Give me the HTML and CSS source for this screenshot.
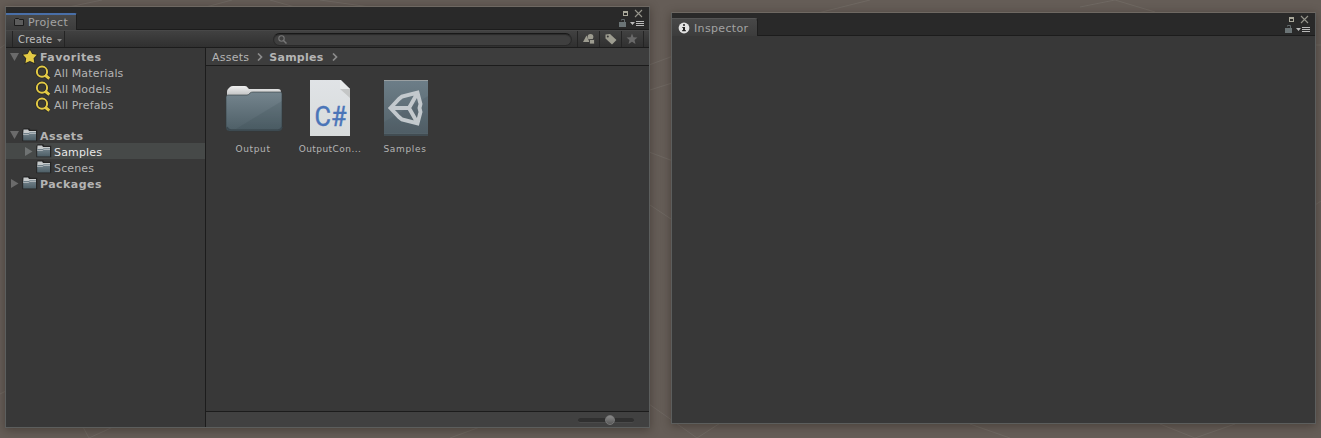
FILE: index.html
```
<!DOCTYPE html>
<html lang="en">
<head>
<meta charset="utf-8">
<title>Project</title>
<link rel="stylesheet" href="styles.css">
</head>
<body>
<svg width="0" height="0" class="defs">
  <defs>
    <linearGradient id="fold" x1="0" y1="0" x2="0" y2="1"><stop offset="0" stop-color="#75858e"/><stop offset="1" stop-color="#4d5e66"/></linearGradient>
    <linearGradient id="card" x1="0" y1="0" x2="0" y2="1"><stop offset="0" stop-color="#6d7e88"/><stop offset="1" stop-color="#526067"/></linearGradient>
    <linearGradient id="tabg" x1="0" y1="0" x2="0" y2="1"><stop offset="0" stop-color="#f0f0f0"/><stop offset="1" stop-color="#a9abac"/></linearGradient>
    <linearGradient id="paper" x1="0" y1="0" x2="0" y2="1"><stop offset="0" stop-color="#e0e3e6"/><stop offset="1" stop-color="#d7dbdb"/></linearGradient>
    <symbol id="folder" viewBox="0 0 16 14">
      <path d="M1 2.500L2 1h5l1 1.500h6.500v10H1z" fill="#252a2d" stroke="#252525" stroke-width="1.500"/>
      <path d="M1.500 1.500h4.500l1 1.500h7v3H1.200z" fill="#c6cacb"/>
      <path d="M1.200 5h5.500l1-.7H14V12.500H1.200z" fill="url(#fold)"/>
      <path d="M1.200 6.500h5.500l1-1H14" fill="none" stroke="#b2b9bc" stroke-width=".9"/>
    </symbol>
    <symbol id="search" viewBox="0 0 16 16">
      <path d="M10 10l4 3.500" stroke="#242424" stroke-width="4.600"/>
      <circle cx="7" cy="6.700" r="5.100" fill="#3b3a34" stroke="#292826" stroke-width="3.400"/>
      <path d="M10 10l4.300 3.600" stroke="#e3ca45" stroke-width="3"/>
      <circle cx="7" cy="6.700" r="5.100" fill="none" stroke="#e3ca45" stroke-width="2"/>
    </symbol>
    <symbol id="controls" viewBox="0 0 28 20">
      <path d="M6 3h5v5H6zM7 5v2h3V5z" fill="#aaa99b" fill-rule="evenodd"/>
      <path d="M18 2l7 7M25 2l-7 7" stroke="#96958c" stroke-width="1.100"/>
      <path d="M2 14h7v5H2z" fill="#6b7476"/><path d="M4.500 12.500v-1h3V14" fill="none" stroke="#626a6c" stroke-width="1"/>
      <path d="M13 14h5l-2.500 3zM19 13h8v1h-8zM19 15h8v1h-8zM19 17h8v1h-8z" fill="#b9b9b9"/>
    </symbol>
  </defs>
</svg>
<svg class="scene" width="1321" height="438">
  <path d="M64 8L102 0M232 0l-26 7M270 0l25 7M320 0l50 7M650 205l30 20M649 404l48 34 28-18M83 427l6 11 24-11M0 48l6-4M0 394l6-3M649 65l24-9M649 152l24 9M1080 7l35-7 40 12M870 0l-56 14M1315 45h6M1315 205l6-4M650 90l22-7M1160 424l35 14 40-14M450 438l30-11M1010 438l-40-14" fill="none" stroke="#6f6862"/>
</svg>
<main class="desktop">
  <section class="window project">
    <header class="tabs">
      <div class="tab active"><svg class="tabicon" width="12" height="10"><path d="M1.500 8.500v-6l1-1h3l1 1h4v6z" fill="#5c5c5c" stroke="#1c1c1c"/></svg><span>Project</span></div>
      <svg class="controls" width="28" height="20"><use href="#controls"/></svg>
    </header>
    <div class="toolbar">
      <div class="create"><span>Create</span><svg width="5" height="3"><path d="M0 0h5L2.500 3z" fill="#8a8a8a"/></svg></div>
      <div class="field"><svg width="9" height="9"><circle cx="3.500" cy="3.500" r="2.700" fill="none" stroke="#777" stroke-width="1.100"/><path d="M5.500 5.500l3 3" stroke="#777" stroke-width="1.500"/></svg></div>
      <div class="tool"><svg width="12" height="12"><path d="M0 9L3.500 2.500 6.500 9z" fill="#9d9c90"/><circle cx="7.500" cy="3.800" r="2.900" fill="#9d9c90"/><path d="M6.500 6.500h5v4.500h-5z" fill="#9d9c90" stroke="#363636" stroke-width=".8"/></svg></div>
      <div class="tool"><svg width="12" height="12"><path d="M.5 1.500v4l6.500 6L11.500 7 5 1z" fill="#9d9c90"/><circle cx="2.800" cy="3.500" r="1" fill="#363636"/></svg></div>
      <div class="tool"><svg width="12" height="12"><path d="M6 .5l1.500 3.700 4 .2-3 2.600 1 4L6 8.800 2.500 11l1-4-3-2.600 4-.2z" fill="#696969"/></svg></div>
    </div>
    <div class="body">
      <nav class="tree">
        <div class="row head"><svg class="arrow" width="9" height="8"><path d="M0 0h9L4.500 8z" fill="#6b6b6b"/></svg><svg class="star" width="16" height="16"><path d="M7.900 1l2.300 4.100 4.600.7-3.200 3.400.7 4.900-4.400-2.100-4.400 2.100.7-4.900L1 5.800l4.600-.7z" fill="#e3ca45" stroke="#2c2a20" stroke-width="1.600" paint-order="stroke"/></svg><span>Favorites</span></div>
        <div class="row child"><svg class="mag" width="16" height="16"><use href="#search"/></svg><span>All Materials</span></div>
        <div class="row child"><svg class="mag" width="16" height="16"><use href="#search"/></svg><span>All Models</span></div>
        <div class="row child"><svg class="mag" width="16" height="16"><use href="#search"/></svg><span>All Prefabs</span></div>
        <div class="group">
          <div class="row head"><svg class="arrow" width="9" height="8"><path d="M0 0h9L4.500 8z" fill="#6b6b6b"/></svg><svg class="fold" width="16" height="14"><use href="#folder"/></svg><span>Assets</span></div>
          <div class="row child selected"><svg class="arrow" width="9" height="9"><path d="M1 0v9l7.500-4.500z" fill="#6f7373"/></svg><svg class="fold" width="16" height="14"><use href="#folder"/></svg><span>Samples</span></div>
          <div class="row child"><svg class="fold" width="16" height="14"><use href="#folder"/></svg><span>Scenes</span></div>
          <div class="row head"><svg class="arrow" width="9" height="9"><path d="M1 0v9l7.500-4.500z" fill="#6b6b6b"/></svg><svg class="fold" width="16" height="14"><use href="#folder"/></svg><span>Packages</span></div>
        </div>
      </nav>
      <div class="content">
        <div class="crumbs"><span class="c1">Assets</span><svg class="chev" width="6" height="8"><path d="M1 .5L4.500 4 1 7.500" fill="none" stroke="#8b8b8b" stroke-width="1.700"/></svg><b>Samples</b><svg class="chev" width="6" height="8"><path d="M1 .5L4.500 4 1 7.500" fill="none" stroke="#8b8b8b" stroke-width="1.700"/></svg></div>
        <div class="grid">
          <figure class="item"><svg width="64" height="64" viewBox="0 0 64 64">
            <path d="M5 16q0-2 1-3l2-2q1-1 3-1h12q2 0 3 2l1 1h29q3 0 3 3v8H5z" fill="url(#tabg)"/>
            <path d="M4 21q0-2 2-2h19q2 0 3-2 1-1 3-1h28q1 0 1 2v33q0 4-4 4H8q-4 0-4-4z" fill="url(#fold)" stroke="#313a3e" stroke-width=".6"/>
            <path d="M60 25L14 53H56q4 0 4-4z" fill="#33444c" opacity=".16"/>
            <path d="M5 51q1 3 4 3h47q3 0 4-3" fill="none" stroke="#3b484f" stroke-width="1.500"/></svg><figcaption>Output</figcaption></figure>
          <figure class="item"><svg width="64" height="64" viewBox="0 0 64 64">
            <path d="M12 4h31l9 9v47H12z" fill="url(#paper)"/><path d="M42 4v8q0 1 1 1h9v9L42 13z" fill="#c4c6c6"/><path d="M42 4l10 9h-9q-1 0-1-1z" fill="#e7eaea"/>
            <text class="cs" x="16.500" y="50" textLength="32" lengthAdjust="spacingAndGlyphs">C#</text></svg><figcaption>OutputCon...</figcaption></figure>
          <figure class="item"><svg width="64" height="64" viewBox="0 0 64 64">
            <path d="M10 4h44v56H10z" fill="url(#card)"/><path d="M54 20v37H10V46z" fill="#3c4c54" opacity=".16"/><path d="M10 4.500h44" stroke="#9aa0a2"/><path d="M10 59h44" stroke="#414c52" stroke-width="2"/>
            <path d="M16.500 32L25 23l3-2.500L43.500 16.500 46.500 28l-1 4 1 4L43.500 47.500 28 43.500 25 41zM17 32H35L43.500 17M35 32l8.500 15" fill="none" stroke="#c3c9cd" stroke-width="3.900"/></svg><figcaption>Samples</figcaption></figure>
        </div>
        <footer class="status"><div class="slider"><div class="knob"></div></div></footer>
      </div>
    </div>
  </section>
  <section class="window inspector">
    <header class="tabs">
      <div class="tab"><svg class="tabicon" width="12" height="12"><circle cx="6" cy="6" r="5.400" fill="#e2e2e2"/><path d="M5 2.300h2v1.500H5zM4.300 5H7v3h.8v1.200H4.200V8H5V6h-.7z" fill="#222"/></svg><span>Inspector</span></div>
      <svg class="controls" width="28" height="20"><use href="#controls"/></svg>
    </header>
  </section>
</main>
</body>
</html>
```

FILE: styles.css
```
* { box-sizing: border-box; }
body { margin: 0; width: 1321px; height: 438px; overflow: hidden; background: #655d57; font: 11px/16px "DejaVu Sans", sans-serif; color: #b4b4b4; }
svg { display: block; flex: none; }
.defs, .scene { position: absolute; top: 0; left: 0; }
.desktop { position: relative; display: flex; align-items: flex-start; gap: 22px; padding: 6px 5px 0; }
.window { display: flex; flex-direction: column; flex: none; background: #383838; border: 1px solid #5c5e5d; border-top-color: #6e6862; box-shadow: 0 2px 9px rgba(30, 20, 15, .4); }
.project { width: 645px; height: 422px; }
.inspector { width: 645px; height: 412px; margin-top: 6px; margin-left: -1px; }
.tabs { display: flex; align-items: flex-end; justify-content: space-between; height: 23px; background: #292929; border-bottom: 1px solid #1c1c1c; }
.tab { display: flex; align-items: center; height: 17px; margin-bottom: -1px; background: linear-gradient(#484848, #3c3c3c); border-right: 1px solid #1e1e1e; border-top: 1px solid #555; border-radius: 0 3px 0 0; color: #a3a3a3; white-space: nowrap; }
.active { width: 71px; border-top: 2px solid #496fa8; border-radius: 0 2px 0 0; padding-left: 7px; gap: 3px; }
.active .tabicon { margin-top: -1px; }
.inspector .tab { width: 86px; height: 18px; padding-left: 6px; gap: 4px; }
.inspector .tab span { padding-top: 2px; }
.tab span { letter-spacing: .35px; }
.controls { margin: 0 4px 1px 0; }
.toolbar { display: flex; height: 18px; flex: none; padding-left: 6px; background: linear-gradient(#414141, #303030); border-top: 1px solid #484848; border-bottom: 1px solid #1c1c1c; }
.create { display: flex; align-items: center; gap: 5px; width: 53px; padding-left: 5px; border: solid #242424; border-width: 0 1px; font-size: 10px; color: #c0c0c0; }
.create span { letter-spacing: .2px; padding-top: 2px; }
.create svg { margin-top: 2px; }
.field { display: flex; align-items: center; width: 299px; height: 13px; margin: 2px 5px 0 208px; padding-left: 4px; border-radius: 7px; background: #3f3f3f; border: 1px solid #292929; border-top-color: #181818; box-shadow: inset 0 1px 1px #2b2b2b; }
.tool { display: flex; align-items: center; justify-content: center; width: 22px; border-left: 1px solid #242424; }
.tool:last-child { border-right: 1px solid #242424; width: 23px; padding-right: 2px; }
.body { display: flex; flex: 1; min-height: 0; }
.tree { width: 200px; padding-top: 1px; border-right: 1px solid #1c1c1c; }
.row { display: flex; align-items: center; height: 16px; padding-left: 4px; white-space: nowrap; }
.row span { padding-top: 2px; }
.head { font-weight: bold; }
.head .arrow { margin-right: 3px; }
.head span { margin-left: 2px; letter-spacing: .45px; }
.child { padding-left: 30px; }
.child span { margin-left: 2px; letter-spacing: .15px; }
.group { margin-top: 14px; }
.group .row span { padding-top: 4px; }
.mag { margin: 0 0 1px -1px; }
.mag + span { margin-left: 3px; }
.selected { padding-left: 18px; background: #464948; color: #e8e8e8; }
.selected .arrow { margin-right: 3px; }
.content { display: flex; flex-direction: column; flex: 1; }
.crumbs { display: flex; align-items: center; height: 18px; padding-left: 6px; background: #3d3d3d; border-bottom: 1px solid #1c1c1c; }
.crumbs span, .crumbs b { letter-spacing: .25px; padding-top: 2px; }
.chev { margin: 0 6px 0 8px; }
.grid { display: flex; gap: 12px; flex: 1; padding: 10px 0 0 16px; }
.item { width: 64px; margin: 0; font-size: 9px; line-height: 14px; text-align: center; letter-spacing: .45px; white-space: nowrap; }
.item figcaption { margin-top: 2px; }
.item:first-child figcaption, .item:last-child figcaption { margin-right: 2px; letter-spacing: .65px; }
.cs { font: 27px Roboto, sans-serif; fill: #4a75b8; stroke: #4a75b8; stroke-width: .4px; letter-spacing: 0; }
.status { height: 16px; display: flex; justify-content: flex-end; align-items: center; padding-right: 15px; background: #414141; border-top: 1px solid #1c1c1c; }
.slider { display: flex; align-items: center; width: 56px; height: 5px; padding-left: 27px; margin-top: 1px; border-radius: 3px; background: #303030; border-bottom: 1px solid #4a4a4a; }
.knob { width: 10px; height: 10px; border-radius: 50%; background: linear-gradient(#898989, #585858); border: 1px solid #777; }
```
